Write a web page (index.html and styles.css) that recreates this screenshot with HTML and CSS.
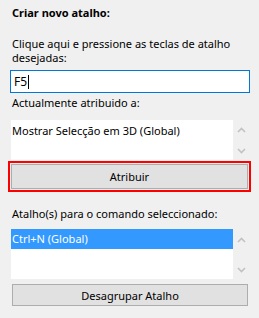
FILE: index.html
```html
<!DOCTYPE html>
<html lang="pt">
<head>
  <meta charset="UTF-8">
  <title>Criar novo atalho</title>
  <link rel="stylesheet" href="styles.css">
</head>
<body>

  <div class="panel">
    <div class="title">Criar novo atalho:</div>

    <div class="label label-two">Clique aqui e pressione as teclas de atalho desejadas:</div>
    <div class="key-input">F5<span class="caret"></span></div>

    <div class="label label-current">Actualmente atribuido a:</div>
    <div class="list-row list-current">
      <div class="list-box">
        <div class="list-item">Mostrar Selecção em 3D (Global)</div>
      </div>
      <div class="scroll">
        <svg width="9" height="6" viewBox="0 0 9 6"><path d="M1 5 L4.5 1.5 L8 5" fill="none" stroke="#c2c2c2" stroke-width="1.6"/></svg>
        <svg width="9" height="6" viewBox="0 0 9 6"><path d="M1 1 L4.5 4.5 L8 1" fill="none" stroke="#c2c2c2" stroke-width="1.6"/></svg>
      </div>
    </div>

    <div class="focus-ring">
      <button class="btn">Atribuir</button>
    </div>

    <div class="label label-shortcuts">Atalho(s) para o comando seleccionado:</div>
    <div class="list-row list-shortcuts">
      <div class="list-box">
        <div class="list-item selected">Ctrl+N (Global)</div>
      </div>
      <div class="scroll">
        <svg width="9" height="6" viewBox="0 0 9 6"><path d="M1 5 L4.5 1.5 L8 5" fill="none" stroke="#c2c2c2" stroke-width="1.6"/></svg>
        <svg width="9" height="6" viewBox="0 0 9 6"><path d="M1 1 L4.5 4.5 L8 1" fill="none" stroke="#c2c2c2" stroke-width="1.6"/></svg>
      </div>
    </div>

    <button class="btn btn-wide">Desagrupar Atalho</button>
  </div>

</body>
</html>
```

FILE: styles.css
```css
body {
  margin: 0;
  background-color: #f0f0f0;
  color: #000;
  font-family: "Noto Sans", sans-serif;
  font-size: 11px;
  height: 318px;
}

.panel {
  padding: 5px 0 0 10px;
  width: 240px;
}

.title {
  font-weight: bold;
  line-height: 15px;
  padding-left: 2px;
}

.label {
  line-height: 14px;
  padding-left: 2px;
}

.label-two {
  margin-top: 17px;
}

.key-input {
  margin-top: 5px;
  height: 21px;
  border: 1px solid #0078d7;
  background: #fff;
  line-height: 21px;
  padding-left: 3px;
  display: flex;
  align-items: center;
  font-size: 12px;
}

.caret {
  display: inline-block;
  width: 1px;
  height: 14px;
  background: #000;
  margin-left: 1px;
}

.label-current {
  margin-top: 3px;
}

.list-row {
  display: flex;
  margin-left: 1px;
}

.list-box {
  width: 222px;
  background: #fff;
}

.list-item {
  height: 20px;
  line-height: 20px;
  padding-left: 1px;
}

.list-item.selected {
  background: #3399ff;
  color: #fff;
}

.scroll {
  flex: 1;
  display: flex;
  flex-direction: column;
  justify-content: space-between;
  align-items: center;
  padding: 8px 0 6px;
}

.list-current {
  margin-top: 10px;
  height: 40px;
}

.list-current .list-item {
  height: 22px;
  line-height: 22px;
}

.list-current .scroll {
  padding: 7px 0 6px;
}

.list-shortcuts {
  margin-top: 8px;
  height: 50px;
}

.focus-ring {
  margin-top: 1px;
  margin-left: -2px;
  width: 243px;
  height: 31px;
  box-sizing: border-box;
  border: 2px solid #ff0000;
  padding: 1px;
}

.btn {
  display: block;
  width: 100%;
  height: 100%;
  box-sizing: border-box;
  border: 1px solid #adadad;
  background: #e1e1e1;
  font-family: inherit;
  font-size: 11px;
  color: #000;
  padding: 0;
}

.label-shortcuts {
  margin-top: 15px;
}

.btn-wide {
  margin: 5px 0 0 2px;
  width: 236px;
  height: 22px;
}
```
